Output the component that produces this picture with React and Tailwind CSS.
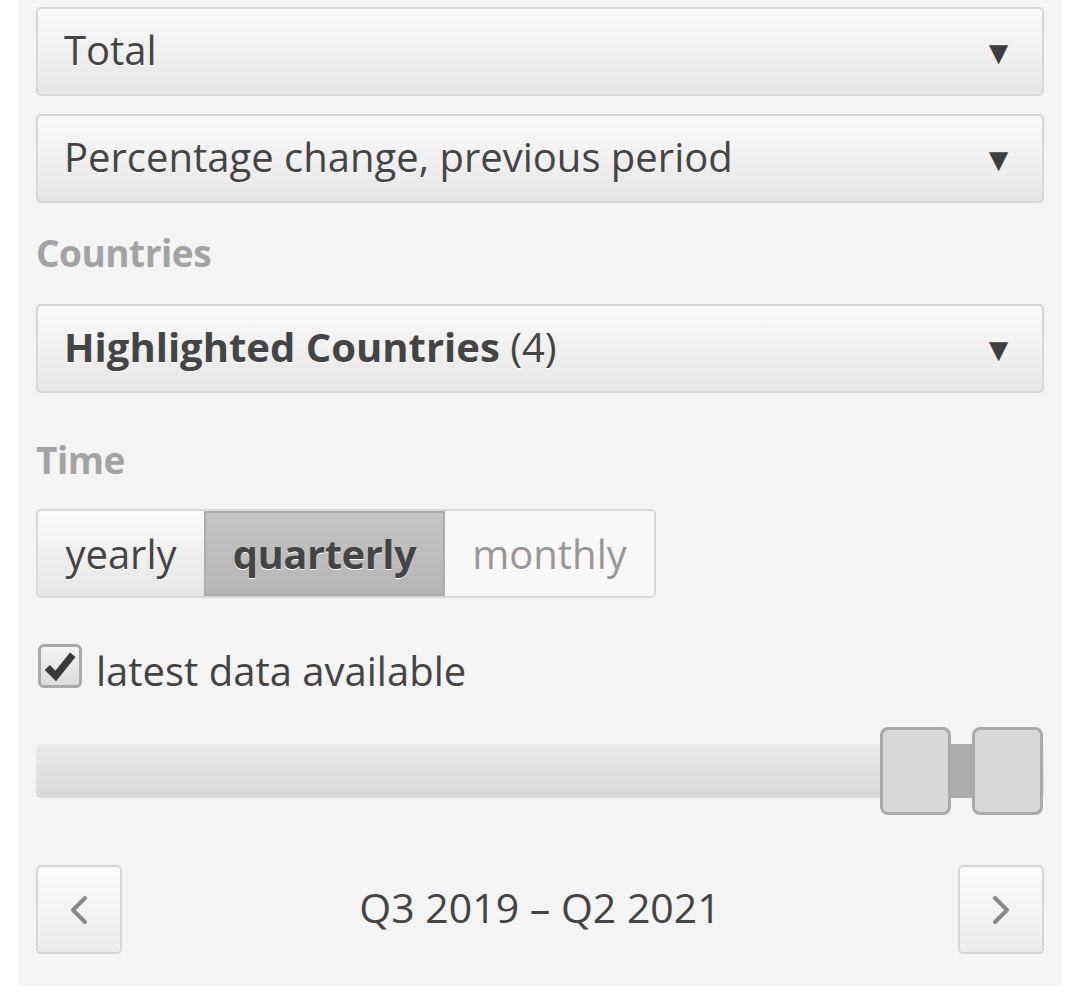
import { ChevronLeft, ChevronRight } from "lucide-react";

const font = { fontFamily: '"Open Sans", "Noto Sans", sans-serif' };

const Select = ({ children }) => (
  <div className="flex items-center justify-between h-[89px] px-[26px] border-2 border-[#d6d6d6] rounded-[5px] bg-gradient-to-b from-[#fafafa] to-[#e6e6e6] text-[#444] text-[40px] [text-shadow:0_1px_0_#fff]">
    <span className="truncate pb-[3px]">{children}</span>
    <span className="text-[33px] pr-[1px] text-[#3e3e3e]">▼</span>
  </div>
);

const Label = ({ children }) => (
  <div className="text-[#a3a3a3] text-[37px] font-bold tracking-[-0.5px] leading-none">{children}</div>
);

export default function App() {
  return (
    <div className="w-[1080px] h-[1004px] bg-white" style={font}>
      <div className="mx-[18px] h-[986px] bg-[#f4f4f4] px-[18px] pt-[7px] flex flex-col">
        <Select>Total</Select>
        <div className="mt-[18px]">
          <Select>Percentage change, previous period</Select>
        </div>
        <div className="mt-[31px] mb-[33px]">
          <Label>Countries</Label>
        </div>
        <Select>
          <span className="font-bold">Highlighted Countries</span> (4)
        </Select>
        <div className="mt-[48px] mb-[31px]">
          <Label>Time</Label>
        </div>
        <div className="flex h-[89px] w-[620px] border-2 border-[#d8d8d8] rounded-[5px] overflow-hidden text-[40px] [text-shadow:0_1px_0_#fff]">
          <div className="w-[166px] flex items-center justify-center bg-gradient-to-b from-[#fafafa] to-[#e6e6e6] text-[#444]">yearly</div>
          <div className="w-[241px] flex items-center justify-center bg-gradient-to-b from-[#c4c4c4] to-[#b6b6b6] border-2 border-[#acacac] font-bold text-[#444] tracking-[-0.5px]">quarterly</div>
          <div className="flex-1 flex items-center justify-center bg-[#f8f8f8] text-[#9a9696]">monthly</div>
        </div>
        <label className="flex items-center gap-[14px] mt-[43px] text-[40px] text-[#444]">
          <span className="w-[44px] h-[44px] rounded-[6px] border-[3px] border-[#a9a9a9] bg-gradient-to-b from-[#f4f4f4] to-[#dcdcdc] flex items-center justify-center ml-[2px]">
            <svg viewBox="0 0 24 24" className="w-[34px] h-[34px]">
              <path d="M3 13 L9 19 L21 4" fill="none" stroke="#3a3a3a" strokeWidth="5" strokeLinejoin="miter" />
            </svg>
          </span>
          <span className="leading-none pt-[10px]">latest data available</span>
        </label>
        <div className="relative mt-[36px] h-[88px] flex items-center">
          <div className="w-full h-[54px] rounded-[5px] bg-gradient-to-b from-[#e9e9e9] to-[#d9d9d9]" />
          <div className="absolute left-[910px] w-[30px] top-[17px] h-[54px] bg-[#adadad]" />
          <div className="absolute left-[844px] top-0 w-[71px] h-[88px] rounded-[8px] border-[3px] border-[#aaa] bg-[#d8d8d8]" />
          <div className="absolute left-[936px] top-0 w-[71px] h-[88px] rounded-[8px] border-[3px] border-[#aaa] bg-[#d8d8d8]" />
        </div>
        <div className="mt-[50px] flex items-center justify-between">
          <button className="w-[86px] h-[89px] flex items-center justify-center border-2 border-[#d6d6d6] rounded-[5px] bg-gradient-to-b from-[#fafafa] to-[#ececec]">
            <ChevronLeft className="w-[48px] h-[48px] text-[#8c8686]" strokeWidth={2} />
          </button>
          <span className="text-[41px] text-[#444] pb-[4px]">Q3 2019 – Q2 2021</span>
          <button className="w-[86px] h-[89px] flex items-center justify-center border-2 border-[#d6d6d6] rounded-[5px] bg-gradient-to-b from-[#fafafa] to-[#ececec]">
            <ChevronRight className="w-[48px] h-[48px] text-[#8c8686]" strokeWidth={2} />
          </button>
        </div>
      </div>
    </div>
  );
}
